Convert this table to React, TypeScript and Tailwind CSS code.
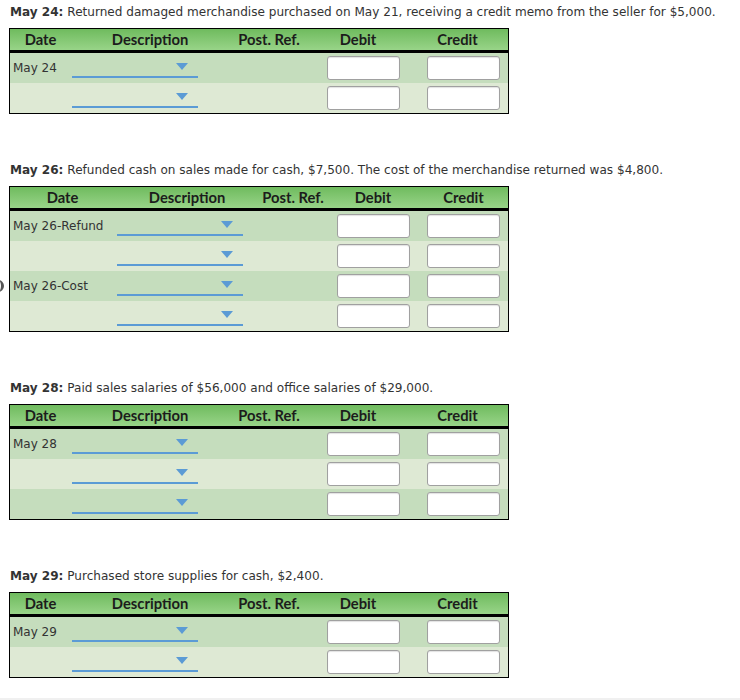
import React from "react";

type Cols = { date: number; desc: number; post: number; debit: number; credit: number; descPad: number; debitPr: number };

const COLS_A: Cols = { date: 61, desc: 158, post: 80, debit: 98, credit: 101, descPad: 1, debitPr: 7 };
const COLS_B: Cols = { date: 105, desc: 144, post: 68, debit: 92, credit: 89, descPad: 2, debitPr: 9 };

function Caret() {
  return (
    <svg width="12" height="7" viewBox="0 0 12 7" className="block">
      <polygon points="0,0 12,0 6,7" fill="#5b9bd5" />
    </svg>
  );
}

function Select() {
  return (
    <div className="w-[126px] h-[25px] border-b-2 border-[#5b9bd5] flex items-start justify-end pr-[10px] pt-[10px]">
      <Caret />
    </div>
  );
}

function Input() {
  return (
    <div className="w-[73px] h-[24px] bg-white border border-[#a0a0a0] rounded-[3px] shadow-[inset_0_1px_1px_rgba(0,0,0,0.12)]" />
  );
}

function Table({ cols, dates, mark }: { cols: Cols; dates: string[]; mark?: number }) {
  const hdr = "flex items-center justify-center";
  return (
    <div className="w-[500px] border border-black">
      <div className="flex h-[21px] bg-gradient-to-b from-[#6fbb5e] to-[#98d488] text-[14.75px] font-bold text-[#1c1c1c] font-['Lato',sans-serif] leading-none">
        <div className={hdr} style={{ width: cols.date }}>Date</div>
        <div className={hdr} style={{ width: cols.desc }}>Description</div>
        <div className={hdr} style={{ width: cols.post }}>Post. Ref.</div>
        <div className={hdr} style={{ width: cols.debit }}>Debit</div>
        <div className={hdr} style={{ width: cols.credit }}>Credit</div>
      </div>
      <div className="h-[3px] bg-black" />
      {dates.map((d, i) => (
        <div
          key={i}
          className={`relative flex h-[30px] ${i % 2 === 0 ? "bg-[#c5ddbd]" : "bg-[#dee9d4]"}`}
        >
          {mark === i && (
            <div className="absolute left-[-20px] top-[9px] w-[14px] h-[12px] rounded-full border-r-[3px] border-[#555]" />
          )}
          <div className="flex items-center pl-[3px] pb-[1px] text-[12px] text-[#333] font-['DejaVu_Sans',sans-serif]" style={{ width: cols.date }}>
            {d}
          </div>
          <div className="flex items-start" style={{ width: cols.desc, paddingLeft: cols.descPad }}>
            <Select />
          </div>
          <div style={{ width: cols.post }} />
          <div className="flex items-center justify-end" style={{ width: cols.debit, paddingRight: cols.debitPr }}>
            <Input />
          </div>
          <div className="flex items-center justify-end pr-[8px]" style={{ width: cols.credit }}>
            <Input />
          </div>
        </div>
      ))}
    </div>
  );
}

function Section({ label, text, cols, dates, mark, first }: { label: string; text: string; cols: Cols; dates: string[]; mark?: number; first?: boolean }) {
  return (
    <div className={first ? "" : "mt-[48px]"}>
      <div className="pl-[1px] h-[17px] leading-[17px] text-[12.07px] text-[#333] font-['DejaVu_Sans',sans-serif] whitespace-nowrap">
        <span className="font-bold">{label}</span> {text}
      </div>
      <div className="mt-[7px]">
        <Table cols={cols} dates={dates} mark={mark} />
      </div>
    </div>
  );
}

export default function App() {
  return (
    <div className="w-[740px] h-[700px] bg-white relative overflow-hidden">
      <div className="pl-[9px] pt-[4px]">
        <Section
          first
          label="May 24:"
          text="Returned damaged merchandise purchased on May 21, receiving a credit memo from the seller for $5,000."
          cols={COLS_A}
          dates={["May 24", ""]}
        />
        <Section
          label="May 26:"
          text="Refunded cash on sales made for cash, $7,500. The cost of the merchandise returned was $4,800."
          cols={COLS_B}
          dates={["May 26-Refund", "", "May 26-Cost", ""]}
          mark={2}
        />
        <Section
          label="May 28:"
          text="Paid sales salaries of $56,000 and office salaries of $29,000."
          cols={COLS_A}
          dates={["May 28", "", ""]}
        />
        <Section
          label="May 29:"
          text="Purchased store supplies for cash, $2,400."
          cols={COLS_A}
          dates={["May 29", ""]}
        />
      </div>
      <div className="absolute left-0 right-0 bottom-0 h-[2px] bg-[#f0f0f0]" />
    </div>
  );
}
